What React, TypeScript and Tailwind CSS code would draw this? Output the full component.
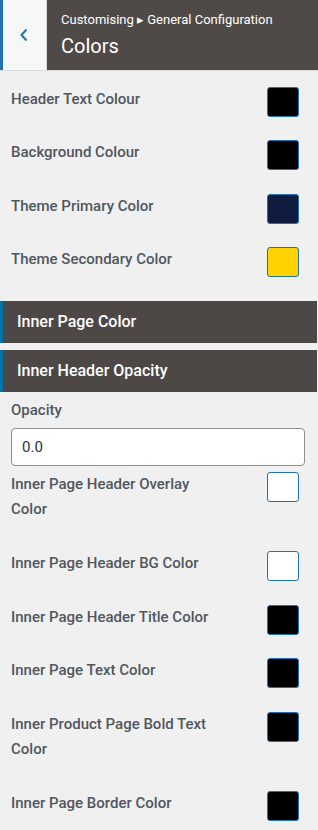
import React from "react";

const font = { fontFamily: "Roboto, 'Noto Sans', sans-serif" };

function Row({ label, color, tight }: { label: React.ReactNode; color: string; tight?: boolean }) {
  return (
    <div className={"flex items-start justify-between pl-[11px] pr-[19px] " + (tight ? "mb-[22px]" : "mb-[23px]")}>
      <div className="text-[15px] leading-[25px] pb-[6px] font-medium text-[#50575e] max-w-[230px]">{label}</div>
      <div
        className="w-[32px] h-[30px] rounded-[3px] border border-[#2271b1] shrink-0"
        style={{ backgroundColor: color }}
      />
    </div>
  );
}

function Section({ title }: { title: string }) {
  return (
    <div className="h-[42px] mr-[1px] bg-[#4d4846] border-l-[3px] border-[#0073aa] flex items-center pl-[14px] text-white text-[16px] font-medium">
      {title}
    </div>
  );
}

export default function App() {
  return (
    <div className="w-[318px] min-h-[830px] bg-[#f0f0f1]" style={font}>
      <div className="flex h-[71px] border-b border-[#dcdcde]">
        <div className="w-[47px] h-[70px] bg-[#f6f7f7] border-l-[3px] border-[#2271b1] border-r border-r-[#dcdcde] flex items-center justify-center pr-[2px]">
          <svg width="10" height="14" viewBox="0 0 10 14" fill="none">
            <path d="M7.5 1.5 L2.5 7 L7.5 12.5" stroke="#2271b1" strokeWidth="2" strokeLinejoin="miter" />
          </svg>
        </div>
        <div className="flex-1 h-[70px] bg-[#4f4a48] pl-[14px] pt-[11px]">
          <div className="text-[13px] leading-[18px] text-white">Customising ▸ General Configuration</div>
          <div className="text-[20px] leading-[26px] text-white mt-[4px]">Colors</div>
        </div>
      </div>
      <div className="pt-[16px]">
        <Row label="Header Text Colour" color="#000000" tight />
        <Row label="Background Colour" color="#000000" />
        <Row label="Theme Primary Color" color="#0f1c40" tight />
        <Row label="Theme Secondary Color" color="#ffd200" />
      </div>
      <div className="mt-[2px]">
        <Section title="Inner Page Color" />
        <div className="h-[7px]" />
        <Section title="Inner Header Opacity" />
      </div>
      <div className="pt-[6px] pl-[11px] pr-[13px]">
        <div className="text-[15px] leading-[25px] font-medium text-[#50575e]">Opacity</div>
        <div className="mt-[5px] h-[38px] bg-white border border-[#8c8f94] rounded-[4px] flex items-center px-[10px] text-[15px] text-[#2c3338]">
          0.0
        </div>
      </div>
      <div className="pt-[6px]">
        <Row label={<>Inner Page Header Overlay<br />Color</>} color="#ffffff" />
        <Row label="Inner Page Header BG Color" color="#ffffff" />
        <Row label="Inner Page Header Title Color" color="#000000" tight />
        <Row label="Inner Page Text Color" color="#000000" />
        <Row label={<>Inner Product Page Bold Text<br />Color</>} color="#000000" />
        <Row label="Inner Page Border Color" color="#000000" />
      </div>
    </div>
  );
}
